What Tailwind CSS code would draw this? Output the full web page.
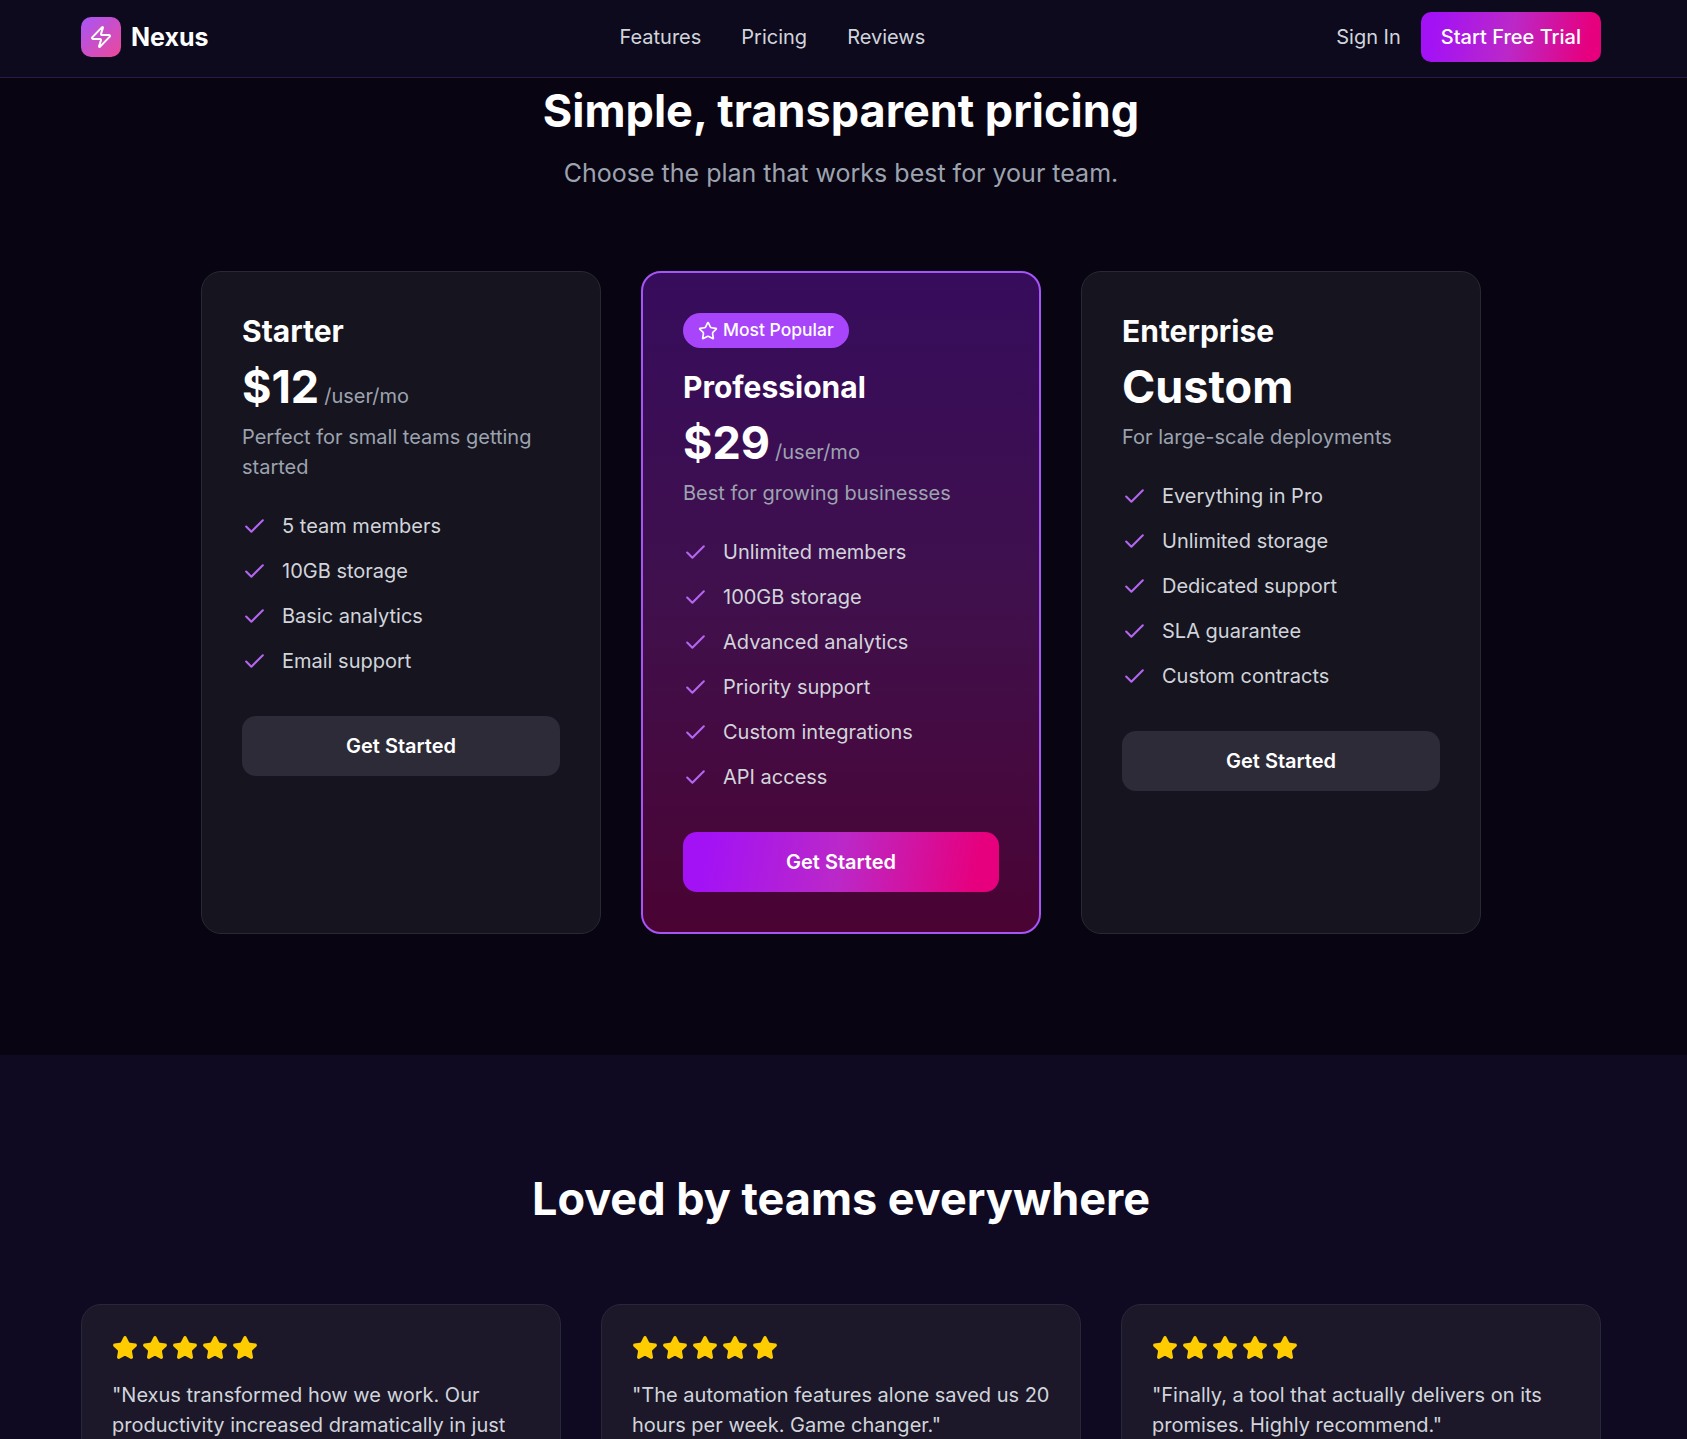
<!DOCTYPE html>
<html lang="en">
<head>
<meta charset="utf-8">
<title>Nexus</title>
<script src="https://cdn.jsdelivr.net/npm/@tailwindcss/browser@4"></script>
</head>
<body class="bg-[#080412] font-['Inter',sans-serif] text-white">
<div class="h-[1439px] overflow-hidden">
  <header class="h-[78px] border-b border-[#2a1a4a] bg-[#0d0a1e] pt-3">
    <div class="mx-[81px] flex h-[50px] w-[1520px] items-center justify-between">
      <div class="flex items-center gap-[10px]">
        <div class="flex h-10 w-10 items-center justify-center rounded-[10px] bg-[linear-gradient(135deg,#a855f7,#ec4899)]">
          <svg class="h-6 w-6" viewBox="0 0 24 24" fill="none" stroke="#fff" stroke-width="2" stroke-linecap="round" stroke-linejoin="round"><path d="M4 14a1 1 0 0 1-.78-1.63l9.9-10.2a.5.5 0 0 1 .86.46l-1.92 6.02A1 1 0 0 0 13 10h7a1 1 0 0 1 .78 1.63l-9.9 10.2a.5.5 0 0 1-.86-.46l1.92-6.02A1 1 0 0 0 11 14z"/></svg>
        </div>
        <span class="mt-[2px] text-[25px] font-bold">Nexus</span>
      </div>
      <nav class="flex items-center gap-10 text-[20px] text-[#d1d5db]">
        <a>Features</a><a>Pricing</a><a>Reviews</a>
      </nav>
      <div class="flex items-center gap-5">
        <a class="text-[20px] text-[#d1d5db]">Sign In</a>
        <button class="h-[50px] rounded-[10px] bg-[linear-gradient(100deg,#a312f5_8%,#bb28c8_50%,#e6007e_92%)] px-5 text-[20px] font-medium">Start Free Trial</button>
      </div>
    </div>
  </header>

  <section class="h-[977px]">
    <div class="mx-[81px] w-[1520px]">
      <h1 class="pt-[3px] text-center text-[45px] leading-[60px] font-bold">Simple, transparent pricing</h1>
      <p class="mt-[15px] text-center text-[25px] leading-[34px] text-[#9ca3af]">Choose the plan that works best for your team.</p>
      <div class="mx-auto mt-[81px] grid w-[1280px] grid-cols-3 gap-10">
        <article class="h-[663px] rounded-[20px] border border-[#2a2833] bg-[#16141f] p-10">
          <h3 class="text-[30px] leading-[39px] font-bold">Starter</h3>
          <div class="mt-[4px] flex h-[64px] items-baseline gap-[5px]"><span class="text-[45px] leading-[64px] font-bold">$12</span><span class="text-[20px] text-[#9ca3af]">/user/mo</span></div>
          <p class="mt-[3px] text-[20px] leading-[30px] text-[#9ca3af]">Perfect for small teams getting started</p>
          <ul class="mt-[29px] flex flex-col gap-[15px] text-[20px] leading-[30px] text-[#d1d5db]">
            <li class="flex items-center gap-[15px]"><svg class="h-[25px] w-[25px] shrink-0" viewBox="0 0 24 24" fill="none" stroke="#b366f0" stroke-width="2" stroke-linecap="round" stroke-linejoin="round"><path d="M20 6 9 17l-5-5"/></svg>5 team members</li>
            <li class="flex items-center gap-[15px]"><svg class="h-[25px] w-[25px] shrink-0" viewBox="0 0 24 24" fill="none" stroke="#b366f0" stroke-width="2" stroke-linecap="round" stroke-linejoin="round"><path d="M20 6 9 17l-5-5"/></svg>10GB storage</li>
            <li class="flex items-center gap-[15px]"><svg class="h-[25px] w-[25px] shrink-0" viewBox="0 0 24 24" fill="none" stroke="#b366f0" stroke-width="2" stroke-linecap="round" stroke-linejoin="round"><path d="M20 6 9 17l-5-5"/></svg>Basic analytics</li>
            <li class="flex items-center gap-[15px]"><svg class="h-[25px] w-[25px] shrink-0" viewBox="0 0 24 24" fill="none" stroke="#b366f0" stroke-width="2" stroke-linecap="round" stroke-linejoin="round"><path d="M20 6 9 17l-5-5"/></svg>Email support</li>
          </ul>
          <button class="mt-10 h-[60px] w-full rounded-[14px] bg-[#2d2b38] text-[20px] font-semibold">Get Started</button>
        </article>

        <article class="h-[663px] rounded-[20px] border-2 border-[#a855f7] bg-[linear-gradient(180deg,#360c5c,#40104c_50%,#4a0333)] p-10">
          <span class="flex h-[35px] w-fit items-center gap-[5px] rounded-full bg-[#a845fb] px-[15px] text-[17.5px] font-medium"><svg class="h-5 w-5" viewBox="0 0 24 24" fill="none" stroke="#fff" stroke-width="2" stroke-linecap="round" stroke-linejoin="round"><path d="M11.525 2.295a.53.53 0 0 1 .95 0l2.31 4.679a2.123 2.123 0 0 0 1.595 1.16l5.166.756a.53.53 0 0 1 .294.904l-3.736 3.638a2.123 2.123 0 0 0-.611 1.878l.882 5.14a.53.53 0 0 1-.771.56l-4.618-2.428a2.122 2.122 0 0 0-1.973 0L6.396 21.01a.53.53 0 0 1-.77-.56l.881-5.139a2.122 2.122 0 0 0-.611-1.879L2.16 9.795a.53.53 0 0 1 .294-.906l5.165-.755a2.122 2.122 0 0 0 1.597-1.16z"/></svg>Most Popular</span>
          <h3 class="mt-[20px] text-[30px] leading-[39px] font-bold">Professional</h3>
          <div class="mt-[4px] flex h-[64px] items-baseline gap-[5px]"><span class="text-[45px] leading-[64px] font-bold">$29</span><span class="text-[20px] text-[#9ca3af]">/user/mo</span></div>
          <p class="mt-[3px] text-[20px] leading-[30px] text-[#9ca3af]">Best for growing businesses</p>
          <ul class="mt-[29px] flex flex-col gap-[15px] text-[20px] leading-[30px] text-[#d1d5db]">
            <li class="flex items-center gap-[15px]"><svg class="h-[25px] w-[25px] shrink-0" viewBox="0 0 24 24" fill="none" stroke="#b366f0" stroke-width="2" stroke-linecap="round" stroke-linejoin="round"><path d="M20 6 9 17l-5-5"/></svg>Unlimited members</li>
            <li class="flex items-center gap-[15px]"><svg class="h-[25px] w-[25px] shrink-0" viewBox="0 0 24 24" fill="none" stroke="#b366f0" stroke-width="2" stroke-linecap="round" stroke-linejoin="round"><path d="M20 6 9 17l-5-5"/></svg>100GB storage</li>
            <li class="flex items-center gap-[15px]"><svg class="h-[25px] w-[25px] shrink-0" viewBox="0 0 24 24" fill="none" stroke="#b366f0" stroke-width="2" stroke-linecap="round" stroke-linejoin="round"><path d="M20 6 9 17l-5-5"/></svg>Advanced analytics</li>
            <li class="flex items-center gap-[15px]"><svg class="h-[25px] w-[25px] shrink-0" viewBox="0 0 24 24" fill="none" stroke="#b366f0" stroke-width="2" stroke-linecap="round" stroke-linejoin="round"><path d="M20 6 9 17l-5-5"/></svg>Priority support</li>
            <li class="flex items-center gap-[15px]"><svg class="h-[25px] w-[25px] shrink-0" viewBox="0 0 24 24" fill="none" stroke="#b366f0" stroke-width="2" stroke-linecap="round" stroke-linejoin="round"><path d="M20 6 9 17l-5-5"/></svg>Custom integrations</li>
            <li class="flex items-center gap-[15px]"><svg class="h-[25px] w-[25px] shrink-0" viewBox="0 0 24 24" fill="none" stroke="#b366f0" stroke-width="2" stroke-linecap="round" stroke-linejoin="round"><path d="M20 6 9 17l-5-5"/></svg>API access</li>
          </ul>
          <button class="mt-10 h-[60px] w-full rounded-[14px] bg-[linear-gradient(100deg,#a312f5_8%,#bb28c8_50%,#e6007e_92%)] text-[20px] font-semibold">Get Started</button>
        </article>

        <article class="h-[663px] rounded-[20px] border border-[#2a2833] bg-[#16141f] p-10">
          <h3 class="text-[30px] leading-[39px] font-bold">Enterprise</h3>
          <div class="mt-[4px] h-[64px] text-[45px] leading-[64px] font-bold">Custom</div>
          <p class="mt-[3px] text-[20px] leading-[30px] text-[#9ca3af]">For large-scale deployments</p>
          <ul class="mt-[29px] flex flex-col gap-[15px] text-[20px] leading-[30px] text-[#d1d5db]">
            <li class="flex items-center gap-[15px]"><svg class="h-[25px] w-[25px] shrink-0" viewBox="0 0 24 24" fill="none" stroke="#b366f0" stroke-width="2" stroke-linecap="round" stroke-linejoin="round"><path d="M20 6 9 17l-5-5"/></svg>Everything in Pro</li>
            <li class="flex items-center gap-[15px]"><svg class="h-[25px] w-[25px] shrink-0" viewBox="0 0 24 24" fill="none" stroke="#b366f0" stroke-width="2" stroke-linecap="round" stroke-linejoin="round"><path d="M20 6 9 17l-5-5"/></svg>Unlimited storage</li>
            <li class="flex items-center gap-[15px]"><svg class="h-[25px] w-[25px] shrink-0" viewBox="0 0 24 24" fill="none" stroke="#b366f0" stroke-width="2" stroke-linecap="round" stroke-linejoin="round"><path d="M20 6 9 17l-5-5"/></svg>Dedicated support</li>
            <li class="flex items-center gap-[15px]"><svg class="h-[25px] w-[25px] shrink-0" viewBox="0 0 24 24" fill="none" stroke="#b366f0" stroke-width="2" stroke-linecap="round" stroke-linejoin="round"><path d="M20 6 9 17l-5-5"/></svg>SLA guarantee</li>
            <li class="flex items-center gap-[15px]"><svg class="h-[25px] w-[25px] shrink-0" viewBox="0 0 24 24" fill="none" stroke="#b366f0" stroke-width="2" stroke-linecap="round" stroke-linejoin="round"><path d="M20 6 9 17l-5-5"/></svg>Custom contracts</li>
          </ul>
          <button class="mt-10 h-[60px] w-full rounded-[14px] bg-[#2d2b38] text-[20px] font-semibold">Get Started</button>
        </article>
      </div>
    </div>
  </section>

  <section class="bg-[#0f0a22] pt-[112px]">
    <div class="mx-[81px] w-[1520px]">
      <h2 class="text-center text-[45px] leading-[64px] font-bold">Loved by teams everywhere</h2>
      <div class="mt-[73px] grid grid-cols-3 gap-10">
        <article class="min-h-[240px] rounded-[20px] border border-[#2a2738] bg-[#1c1829] p-[30px]">
          <div class="flex gap-1 text-[#ffcc00]">
            <svg class="h-[26px] w-[26px]" viewBox="0 0 24 24" fill="currentColor" stroke="currentColor" stroke-width="2" stroke-linejoin="round"><path d="M11.525 2.295a.53.53 0 0 1 .95 0l2.31 4.679a2.123 2.123 0 0 0 1.595 1.16l5.166.756a.53.53 0 0 1 .294.904l-3.736 3.638a2.123 2.123 0 0 0-.611 1.878l.882 5.14a.53.53 0 0 1-.771.56l-4.618-2.428a2.122 2.122 0 0 0-1.973 0L6.396 21.01a.53.53 0 0 1-.77-.56l.881-5.139a2.122 2.122 0 0 0-.611-1.879L2.16 9.795a.53.53 0 0 1 .294-.906l5.165-.755a2.122 2.122 0 0 0 1.597-1.16z"/></svg>
            <svg class="h-[26px] w-[26px]" viewBox="0 0 24 24" fill="currentColor" stroke="currentColor" stroke-width="2" stroke-linejoin="round"><path d="M11.525 2.295a.53.53 0 0 1 .95 0l2.31 4.679a2.123 2.123 0 0 0 1.595 1.16l5.166.756a.53.53 0 0 1 .294.904l-3.736 3.638a2.123 2.123 0 0 0-.611 1.878l.882 5.14a.53.53 0 0 1-.771.56l-4.618-2.428a2.122 2.122 0 0 0-1.973 0L6.396 21.01a.53.53 0 0 1-.77-.56l.881-5.139a2.122 2.122 0 0 0-.611-1.879L2.16 9.795a.53.53 0 0 1 .294-.906l5.165-.755a2.122 2.122 0 0 0 1.597-1.16z"/></svg>
            <svg class="h-[26px] w-[26px]" viewBox="0 0 24 24" fill="currentColor" stroke="currentColor" stroke-width="2" stroke-linejoin="round"><path d="M11.525 2.295a.53.53 0 0 1 .95 0l2.31 4.679a2.123 2.123 0 0 0 1.595 1.16l5.166.756a.53.53 0 0 1 .294.904l-3.736 3.638a2.123 2.123 0 0 0-.611 1.878l.882 5.14a.53.53 0 0 1-.771.56l-4.618-2.428a2.122 2.122 0 0 0-1.973 0L6.396 21.01a.53.53 0 0 1-.77-.56l.881-5.139a2.122 2.122 0 0 0-.611-1.879L2.16 9.795a.53.53 0 0 1 .294-.906l5.165-.755a2.122 2.122 0 0 0 1.597-1.16z"/></svg>
            <svg class="h-[26px] w-[26px]" viewBox="0 0 24 24" fill="currentColor" stroke="currentColor" stroke-width="2" stroke-linejoin="round"><path d="M11.525 2.295a.53.53 0 0 1 .95 0l2.31 4.679a2.123 2.123 0 0 0 1.595 1.16l5.166.756a.53.53 0 0 1 .294.904l-3.736 3.638a2.123 2.123 0 0 0-.611 1.878l.882 5.14a.53.53 0 0 1-.771.56l-4.618-2.428a2.122 2.122 0 0 0-1.973 0L6.396 21.01a.53.53 0 0 1-.77-.56l.881-5.139a2.122 2.122 0 0 0-.611-1.879L2.16 9.795a.53.53 0 0 1 .294-.906l5.165-.755a2.122 2.122 0 0 0 1.597-1.16z"/></svg>
            <svg class="h-[26px] w-[26px]" viewBox="0 0 24 24" fill="currentColor" stroke="currentColor" stroke-width="2" stroke-linejoin="round"><path d="M11.525 2.295a.53.53 0 0 1 .95 0l2.31 4.679a2.123 2.123 0 0 0 1.595 1.16l5.166.756a.53.53 0 0 1 .294.904l-3.736 3.638a2.123 2.123 0 0 0-.611 1.878l.882 5.14a.53.53 0 0 1-.771.56l-4.618-2.428a2.122 2.122 0 0 0-1.973 0L6.396 21.01a.53.53 0 0 1-.77-.56l.881-5.139a2.122 2.122 0 0 0-.611-1.879L2.16 9.795a.53.53 0 0 1 .294-.906l5.165-.755a2.122 2.122 0 0 0 1.597-1.16z"/></svg>
          </div>
          <p class="mt-[19px] text-[20px] leading-[30px] text-[#d1d5db]">"Nexus transformed how we work. Our productivity increased dramatically in just</p>
        </article>
        <article class="min-h-[240px] rounded-[20px] border border-[#2a2738] bg-[#1c1829] p-[30px]">
          <div class="flex gap-1 text-[#ffcc00]">
            <svg class="h-[26px] w-[26px]" viewBox="0 0 24 24" fill="currentColor" stroke="currentColor" stroke-width="2" stroke-linejoin="round"><path d="M11.525 2.295a.53.53 0 0 1 .95 0l2.31 4.679a2.123 2.123 0 0 0 1.595 1.16l5.166.756a.53.53 0 0 1 .294.904l-3.736 3.638a2.123 2.123 0 0 0-.611 1.878l.882 5.14a.53.53 0 0 1-.771.56l-4.618-2.428a2.122 2.122 0 0 0-1.973 0L6.396 21.01a.53.53 0 0 1-.77-.56l.881-5.139a2.122 2.122 0 0 0-.611-1.879L2.16 9.795a.53.53 0 0 1 .294-.906l5.165-.755a2.122 2.122 0 0 0 1.597-1.16z"/></svg>
            <svg class="h-[26px] w-[26px]" viewBox="0 0 24 24" fill="currentColor" stroke="currentColor" stroke-width="2" stroke-linejoin="round"><path d="M11.525 2.295a.53.53 0 0 1 .95 0l2.31 4.679a2.123 2.123 0 0 0 1.595 1.16l5.166.756a.53.53 0 0 1 .294.904l-3.736 3.638a2.123 2.123 0 0 0-.611 1.878l.882 5.14a.53.53 0 0 1-.771.56l-4.618-2.428a2.122 2.122 0 0 0-1.973 0L6.396 21.01a.53.53 0 0 1-.77-.56l.881-5.139a2.122 2.122 0 0 0-.611-1.879L2.16 9.795a.53.53 0 0 1 .294-.906l5.165-.755a2.122 2.122 0 0 0 1.597-1.16z"/></svg>
            <svg class="h-[26px] w-[26px]" viewBox="0 0 24 24" fill="currentColor" stroke="currentColor" stroke-width="2" stroke-linejoin="round"><path d="M11.525 2.295a.53.53 0 0 1 .95 0l2.31 4.679a2.123 2.123 0 0 0 1.595 1.16l5.166.756a.53.53 0 0 1 .294.904l-3.736 3.638a2.123 2.123 0 0 0-.611 1.878l.882 5.14a.53.53 0 0 1-.771.56l-4.618-2.428a2.122 2.122 0 0 0-1.973 0L6.396 21.01a.53.53 0 0 1-.77-.56l.881-5.139a2.122 2.122 0 0 0-.611-1.879L2.16 9.795a.53.53 0 0 1 .294-.906l5.165-.755a2.122 2.122 0 0 0 1.597-1.16z"/></svg>
            <svg class="h-[26px] w-[26px]" viewBox="0 0 24 24" fill="currentColor" stroke="currentColor" stroke-width="2" stroke-linejoin="round"><path d="M11.525 2.295a.53.53 0 0 1 .95 0l2.31 4.679a2.123 2.123 0 0 0 1.595 1.16l5.166.756a.53.53 0 0 1 .294.904l-3.736 3.638a2.123 2.123 0 0 0-.611 1.878l.882 5.14a.53.53 0 0 1-.771.56l-4.618-2.428a2.122 2.122 0 0 0-1.973 0L6.396 21.01a.53.53 0 0 1-.77-.56l.881-5.139a2.122 2.122 0 0 0-.611-1.879L2.16 9.795a.53.53 0 0 1 .294-.906l5.165-.755a2.122 2.122 0 0 0 1.597-1.16z"/></svg>
            <svg class="h-[26px] w-[26px]" viewBox="0 0 24 24" fill="currentColor" stroke="currentColor" stroke-width="2" stroke-linejoin="round"><path d="M11.525 2.295a.53.53 0 0 1 .95 0l2.31 4.679a2.123 2.123 0 0 0 1.595 1.16l5.166.756a.53.53 0 0 1 .294.904l-3.736 3.638a2.123 2.123 0 0 0-.611 1.878l.882 5.14a.53.53 0 0 1-.771.56l-4.618-2.428a2.122 2.122 0 0 0-1.973 0L6.396 21.01a.53.53 0 0 1-.77-.56l.881-5.139a2.122 2.122 0 0 0-.611-1.879L2.16 9.795a.53.53 0 0 1 .294-.906l5.165-.755a2.122 2.122 0 0 0 1.597-1.16z"/></svg>
          </div>
          <p class="mt-[19px] text-[20px] leading-[30px] text-[#d1d5db]">"The automation features alone saved us 20 hours per week. Game changer."</p>
        </article>
        <article class="min-h-[240px] rounded-[20px] border border-[#2a2738] bg-[#1c1829] p-[30px]">
          <div class="flex gap-1 text-[#ffcc00]">
            <svg class="h-[26px] w-[26px]" viewBox="0 0 24 24" fill="currentColor" stroke="currentColor" stroke-width="2" stroke-linejoin="round"><path d="M11.525 2.295a.53.53 0 0 1 .95 0l2.31 4.679a2.123 2.123 0 0 0 1.595 1.16l5.166.756a.53.53 0 0 1 .294.904l-3.736 3.638a2.123 2.123 0 0 0-.611 1.878l.882 5.14a.53.53 0 0 1-.771.56l-4.618-2.428a2.122 2.122 0 0 0-1.973 0L6.396 21.01a.53.53 0 0 1-.77-.56l.881-5.139a2.122 2.122 0 0 0-.611-1.879L2.16 9.795a.53.53 0 0 1 .294-.906l5.165-.755a2.122 2.122 0 0 0 1.597-1.16z"/></svg>
            <svg class="h-[26px] w-[26px]" viewBox="0 0 24 24" fill="currentColor" stroke="currentColor" stroke-width="2" stroke-linejoin="round"><path d="M11.525 2.295a.53.53 0 0 1 .95 0l2.31 4.679a2.123 2.123 0 0 0 1.595 1.16l5.166.756a.53.53 0 0 1 .294.904l-3.736 3.638a2.123 2.123 0 0 0-.611 1.878l.882 5.14a.53.53 0 0 1-.771.56l-4.618-2.428a2.122 2.122 0 0 0-1.973 0L6.396 21.01a.53.53 0 0 1-.77-.56l.881-5.139a2.122 2.122 0 0 0-.611-1.879L2.16 9.795a.53.53 0 0 1 .294-.906l5.165-.755a2.122 2.122 0 0 0 1.597-1.16z"/></svg>
            <svg class="h-[26px] w-[26px]" viewBox="0 0 24 24" fill="currentColor" stroke="currentColor" stroke-width="2" stroke-linejoin="round"><path d="M11.525 2.295a.53.53 0 0 1 .95 0l2.31 4.679a2.123 2.123 0 0 0 1.595 1.16l5.166.756a.53.53 0 0 1 .294.904l-3.736 3.638a2.123 2.123 0 0 0-.611 1.878l.882 5.14a.53.53 0 0 1-.771.56l-4.618-2.428a2.122 2.122 0 0 0-1.973 0L6.396 21.01a.53.53 0 0 1-.77-.56l.881-5.139a2.122 2.122 0 0 0-.611-1.879L2.16 9.795a.53.53 0 0 1 .294-.906l5.165-.755a2.122 2.122 0 0 0 1.597-1.16z"/></svg>
            <svg class="h-[26px] w-[26px]" viewBox="0 0 24 24" fill="currentColor" stroke="currentColor" stroke-width="2" stroke-linejoin="round"><path d="M11.525 2.295a.53.53 0 0 1 .95 0l2.31 4.679a2.123 2.123 0 0 0 1.595 1.16l5.166.756a.53.53 0 0 1 .294.904l-3.736 3.638a2.123 2.123 0 0 0-.611 1.878l.882 5.14a.53.53 0 0 1-.771.56l-4.618-2.428a2.122 2.122 0 0 0-1.973 0L6.396 21.01a.53.53 0 0 1-.77-.56l.881-5.139a2.122 2.122 0 0 0-.611-1.879L2.16 9.795a.53.53 0 0 1 .294-.906l5.165-.755a2.122 2.122 0 0 0 1.597-1.16z"/></svg>
            <svg class="h-[26px] w-[26px]" viewBox="0 0 24 24" fill="currentColor" stroke="currentColor" stroke-width="2" stroke-linejoin="round"><path d="M11.525 2.295a.53.53 0 0 1 .95 0l2.31 4.679a2.123 2.123 0 0 0 1.595 1.16l5.166.756a.53.53 0 0 1 .294.904l-3.736 3.638a2.123 2.123 0 0 0-.611 1.878l.882 5.14a.53.53 0 0 1-.771.56l-4.618-2.428a2.122 2.122 0 0 0-1.973 0L6.396 21.01a.53.53 0 0 1-.77-.56l.881-5.139a2.122 2.122 0 0 0-.611-1.879L2.16 9.795a.53.53 0 0 1 .294-.906l5.165-.755a2.122 2.122 0 0 0 1.597-1.16z"/></svg>
          </div>
          <p class="mt-[19px] text-[20px] leading-[30px] text-[#d1d5db]">"Finally, a tool that actually delivers on its promises. Highly recommend."</p>
        </article>
      </div>
    </div>
  </section>
</div>
</body>
</html>
